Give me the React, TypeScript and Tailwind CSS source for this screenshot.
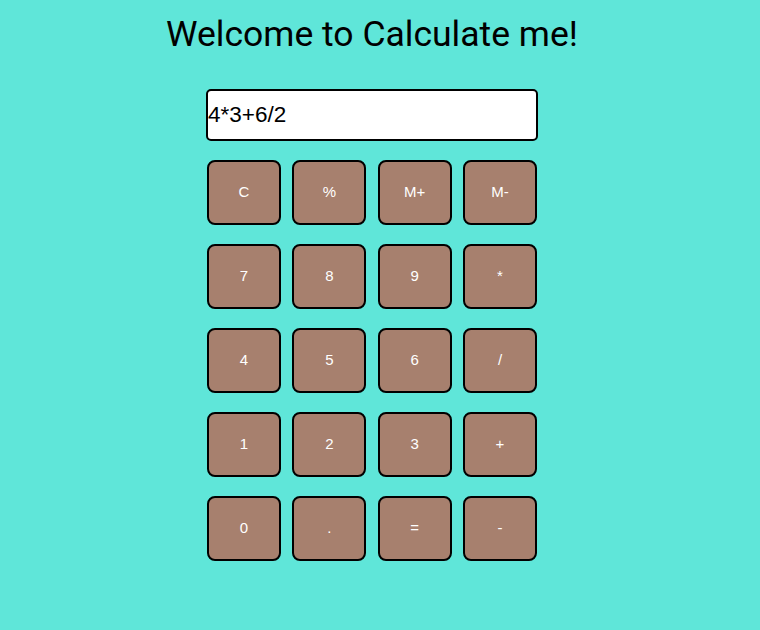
const KEYS = ["C", "%", "M+", "M-", "7", "8", "9", "*", "4", "5", "6", "/", "1", "2", "3", "+", "0", ".", "=", "-"];

export default function App() {
  return (
    <main className="min-h-[630px] w-full bg-[#5fe6d9]">
      <div className="flex w-[744px] flex-col items-center pt-[12px]">
        <h1 className="font-['Roboto',sans-serif] text-[35.5px] leading-[44px] font-normal text-black">Welcome to Calculate me!</h1>

        <section className="mt-[33px] flex flex-col">
          <input
            readOnly
            value="4*3+6/2"
            className="h-[52px] w-[332px] rounded-[5px] border-2 border-black bg-white px-0 font-['Liberation_Sans',Arial,sans-serif] text-[22.5px] text-black outline-none"
          />

          <div className="mt-[19px] ml-[1px] grid grid-cols-[repeat(4,74px)] gap-x-[11.33px] gap-y-[19px]">
            {KEYS.map((k) => (
              <button
                key={k}
                type="button"
                className="h-[65px] w-[74px] rounded-[8px] border-2 border-black bg-[#a7806e] font-['Liberation_Sans',Arial,sans-serif] text-[15px] text-white"
              >
                {k}
              </button>
            ))}
          </div>
        </section>
      </div>
    </main>
  );
}
